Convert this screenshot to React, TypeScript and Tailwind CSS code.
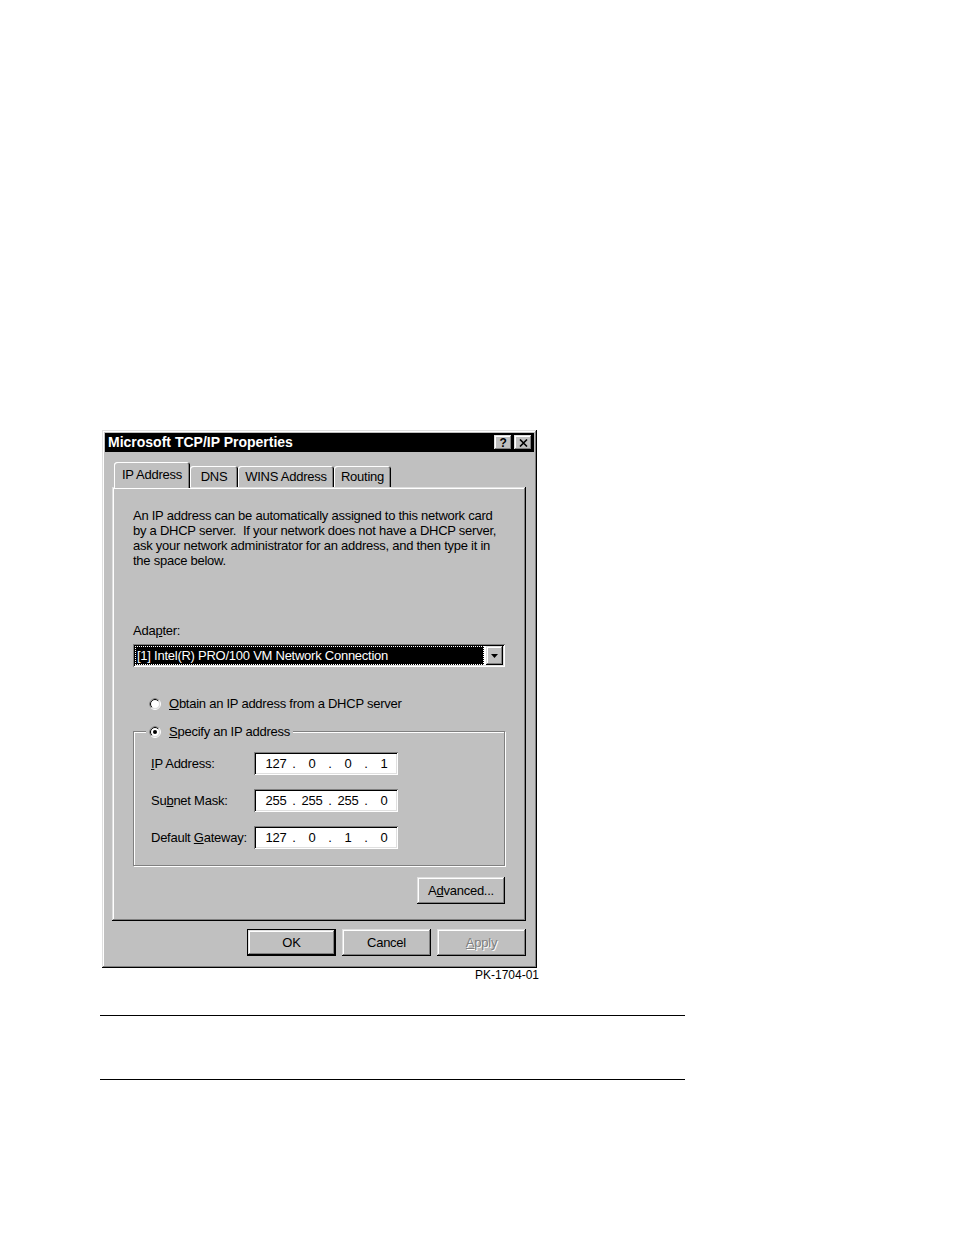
import React from "react";

const raised =
  "shadow-[inset_-1px_-1px_#000,inset_1px_1px_#dfdfdf,inset_-2px_-2px_#808080,inset_2px_2px_#fff]";
const sunken =
  "shadow-[inset_1px_1px_#808080,inset_-1px_-1px_#fff,inset_2px_2px_#000,inset_-2px_-2px_#dfdfdf]";
const tab =
  "flex items-center justify-center rounded-t-[3px] bg-[#c0c0c0] shadow-[inset_1px_1px_#fff,inset_-1px_0_#000,inset_-2px_0_#808080]";

function Radio({ checked }: { checked?: boolean }) {
  return (
    <svg width="12" height="12" viewBox="0 0 12 12" className="shrink-0">
      <circle cx="6" cy="6" r="5.5" fill="none" stroke="#fff" />
      <path d="M2.1 9.9 A5.5 5.5 0 0 1 9.9 2.1" fill="none" stroke="#808080" />
      <circle cx="6" cy="6" r="4.5" fill="#fff" stroke="#dfdfdf" />
      <path d="M2.8 9.2 A4.5 4.5 0 0 1 9.2 2.8" fill="none" stroke="#000" />
      {checked && <circle cx="6" cy="6" r="2" fill="#000" />}
    </svg>
  );
}

function IpField({ parts }: { parts: string[] }) {
  return (
    <div className={`flex h-[23px] w-[144px] items-center bg-white pl-[9px] ${sunken}`}>
      {parts.map((p, i) => (
        <React.Fragment key={i}>
          <span className="w-[26px] text-center">{p}</span>
          {i < 3 && <span className="w-[10px] text-center">.</span>}
        </React.Fragment>
      ))}
    </div>
  );
}

function Row({ label, parts }: { label: React.ReactNode; parts: string[] }) {
  return (
    <div className="flex items-center">
      <span className="w-[103px]">{label}</span>
      <IpField parts={parts} />
    </div>
  );
}

function Button({
  children,
  w = "w-[89px]",
  isDefault,
  disabled,
}: {
  children: React.ReactNode;
  w?: string;
  isDefault?: boolean;
  disabled?: boolean;
}) {
  return (
    <div
      className={`flex h-[27px] ${w} shrink-0 items-center justify-center bg-[#c0c0c0] ${
        isDefault ? "border border-black" : ""
      }`}
    >
      <div className={`flex h-full w-full items-center justify-center ${raised}`}>
        <span
          className={
            disabled ? "text-[#808080] [text-shadow:1px_1px_#fff]" : "text-black"
          }
        >
          {children}
        </span>
      </div>
    </div>
  );
}

export default function App() {
  return (
    <div className="h-[1235px] w-[954px] whitespace-nowrap bg-white pl-[102px] pt-[430px] font-['Liberation_Sans',Arial,sans-serif] text-[13px] leading-[15px] tracking-[-0.25px] text-black">
      {/* dialog */}
      <div className={`w-[435px] bg-[#c0c0c0] p-[3px] ${raised}`}>
        {/* title bar */}
        <div className="flex h-[19px] items-center justify-between bg-black pl-[3px] pr-[2px]">
          <span className="text-[14px] font-bold tracking-[0px] text-white">Microsoft TCP/IP Properties</span>
          <div className="flex gap-[2px]">
            <div className={`flex h-[15px] w-[18px] items-center justify-center bg-[#c0c0c0] ${raised}`}>
              <span className="text-[12px] font-bold leading-none">?</span>
            </div>
            <div className={`flex h-[15px] w-[18px] items-center justify-center bg-[#c0c0c0] ${raised}`}>
              <svg width="9" height="8" viewBox="0 0 9 8">
                <path d="M1 0.5 L8 7.5 M8 0.5 L1 7.5" stroke="#000" strokeWidth="1.6" />
              </svg>
            </div>
          </div>
        </div>

        <div className="px-[7px] pb-[9px]">
          {/* tabs */}
          <div className="mt-[10px] flex h-[25px] items-end pl-[2px]">
            <div className={`relative z-10 -mb-[1px] h-[26px] w-[76px] pb-[2px] ${tab}`}>IP Address</div>
            <div className={`h-[21px] w-[48px] ${tab}`}>DNS</div>
            <div className={`h-[21px] w-[96px] ${tab}`}>WINS Address</div>
            <div className={`h-[21px] w-[57px] ${tab}`}>Routing</div>
          </div>

          {/* panel */}
          <div className={`flex h-[434px] w-[414px] flex-col bg-[#c0c0c0] px-[21px] pt-[21px] ${raised}`}>
            <p>
              An IP address can be automatically assigned to this network card
              <br />
              by a DHCP server.&nbsp; If your network does not have a DHCP server,
              <br />
              ask your network administrator for an address, and then type it in
              <br />
              the space below.
            </p>

            <div className="mt-[55px]">
              Ada<u>p</u>ter:
            </div>
            <div className={`mt-[6px] flex h-[23px] w-[372px] items-center bg-white p-[2px] ${sunken}`}>
              <div className="flex h-full flex-1 items-center bg-black pl-[1px] outline-1 -outline-offset-1 outline-dotted outline-white">
                <span className="pl-[1px] text-white">[1] Intel(R) PRO/100 VM Network Connection</span>
              </div>
              <div className={`ml-[2px] flex h-full w-[17px] items-center justify-center bg-[#c0c0c0] ${raised}`}>
                <svg width="7" height="4" viewBox="0 0 7 4">
                  <path d="M0 0 H7 L3.5 4 Z" fill="#000" />
                </svg>
              </div>
            </div>

            <div className="mt-[29px] flex h-[15px] items-center gap-[8px] pl-[16px]">
              <Radio />
              <span>
                <u>O</u>btain an IP address from a DHCP server
              </span>
            </div>

            <fieldset className="mt-[13px] w-[372px] border border-[#808080] pb-[16px] shadow-[inset_1px_1px_#fff,1px_1px_#fff]">
              <legend className="ml-[12px] flex items-center gap-[8px] bg-[#c0c0c0] px-[3px]">
                <Radio checked />
                <span>
                  <u>S</u>pecify an IP address
                </span>
              </legend>
              <div className="mt-[13px] flex flex-col gap-[14px] pl-[17px]">
                <Row label={<><u>I</u>P Address:</>} parts={["127", "0", "0", "1"]} />
                <Row label={<>Su<u>b</u>net Mask:</>} parts={["255", "255", "255", "0"]} />
                <Row label={<>Default <u>G</u>ateway:</>} parts={["127", "0", "1", "0"]} />
              </div>
            </fieldset>

            <div className="mt-[11px] flex justify-end">
              <Button w="w-[88px]">
                A<u>d</u>vanced...
              </Button>
            </div>
          </div>

          {/* dialog buttons */}
          <div className="mt-[8px] flex justify-end gap-[6px] pr-[1px]">
            <Button isDefault>OK</Button>
            <Button>Cancel</Button>
            <Button disabled>
              <u>A</u>pply
            </Button>
          </div>
        </div>
      </div>

      <div className="w-[437px] text-right text-[12px] leading-[14px] tracking-[0px]">PK-1704-01</div>

      <div className="-ml-[2px] mt-[33px] h-px w-[585px] bg-black" />
      <div className="-ml-[2px] mt-[63px] h-px w-[585px] bg-black" />
    </div>
  );
}
